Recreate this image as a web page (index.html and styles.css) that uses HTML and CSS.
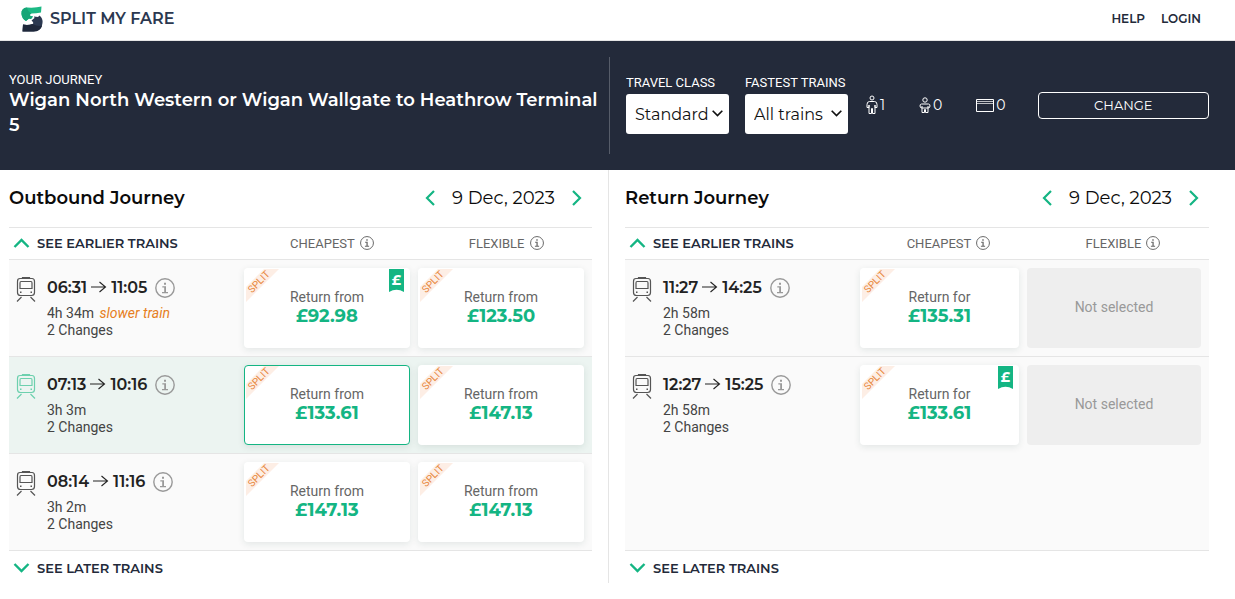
FILE: index.html
```html
<!DOCTYPE html>
<html lang="en">
<head>
<meta charset="utf-8">
<meta name="viewport" content="width=device-width, initial-scale=1">
<title>Split My Fare</title>
<link rel="stylesheet" href="styles.css">
</head>
<body>
<svg class="sprite" aria-hidden="true">
  <symbol id="train" viewBox="0 0 20 26"><g fill="none" stroke="currentColor" stroke-width="1.2"><path d="M4 1.500h12q2.500 0 2.500 3v11q0 3-3 3h-11q-3 0-3-3v-11q0-3 2.500-3zM6.500 1.500v-1h7v1M5 4.500h10q1 0 1 1.500V11.500H4V6Q4 4.500 5 4.500zM5.500 20l-4.500 4.500M14.500 20l4.500 4.500"/></g><path d="M4 14.500h1.500v1.500H4zM14.500 14.500H16v1.500h-1.500z" fill="currentColor"/></symbol>
  <symbol id="info" viewBox="0 0 20 20"><circle cx="10" cy="10" r="9.2" fill="none" stroke="currentColor" stroke-width="1.400"/><path d="M9 4.800h2v2H9zM7.300 8.300h3.700v5.700h2v1.200H7v-1.200h2.200V9.500H7.300z" fill="currentColor"/></symbol>
  <symbol id="arrow" viewBox="0 0 16 12"><path d="M0 6h14.500M8.500 1l6 5-6 5" fill="none" stroke="currentColor" stroke-width="1.100"/></symbol>
  <symbol id="up" viewBox="0 0 16 10"><path d="M1 9l7-7 7 7" fill="none" stroke="currentColor" stroke-width="2.400"/></symbol>
  <symbol id="down" viewBox="0 0 16 10"><path d="M1 1l7 7 7-7" fill="none" stroke="currentColor" stroke-width="2.400"/></symbol>
  <symbol id="prev" viewBox="0 0 10 16"><path d="M9 1L2 8l7 7" fill="none" stroke="currentColor" stroke-width="2.200"/></symbol>
  <symbol id="next" viewBox="0 0 10 16"><path d="M1 1l7 7-7 7" fill="none" stroke="currentColor" stroke-width="2.200"/></symbol>
  <symbol id="best" viewBox="0 0 15 23"><path d="M0 0h15v23q-7.500-4.500-15 0z" fill="#14b583"/></symbol>
</svg>

<header class="topbar">
  <a class="brand" href="#">
    <svg class="brand-mark" viewBox="0 0 22 26" aria-hidden="true">
      <path d="M.500 8Q0 2 6 1.500Q15 2 20.500.5L20 6.500Q15 7.500 10.500 7.500Q8 8.500 9.500 10L12 10.500L10 13L8 12.500L5 15Q1 13 .500 8z" fill="#1cb984"/>
      <path d="M.500 8Q0 2 6 1.500Q7 6 10.500 7.500Q8 8.500 9.500 10L12 10.500L10 13L8 12.500L5 15Q1 13 .500 8z" fill="#17a577"/>
      <path d="M10.500 14.500l3-2.500-.5-1.500 4 .5 1.500-1.500Q22 12 21.500 17q-.5 8-9 8.500H1.500l.5-7q5 1 9.500-.5 2-1-1-3.500z" fill="#2b3850"/>
      <path d="M2 18.500q5 1 9.500-.5 6 3 9.500 1.500-1.500 6-8.500 6H1.500z" fill="#1f283b"/>
    </svg>
    <span>SPLIT MY FARE</span>
  </a>
  <nav class="topnav"><a href="#">HELP</a><a href="#">LOGIN</a></nav>
</header>

<section class="banner">
  <div class="trip">
    <p class="label">YOUR JOURNEY</p>
    <h1>Wigan North Western or Wigan Wallgate to Heathrow Terminal 5</h1>
  </div>
  <form class="filters">
    <div class="field"><label class="label" for="class">TRAVEL CLASS</label>
      <span class="select"><select id="class"><option>Standard</option></select><svg viewBox="0 0 16 10"><use href="#down"/></svg></span></div>
    <div class="field"><label class="label" for="speed">FASTEST TRAINS</label>
      <span class="select"><select id="speed"><option>All trains</option></select><svg viewBox="0 0 16 10"><use href="#down"/></svg></span></div>
    <div class="party">
      <span class="count"><svg width="12" height="20" viewBox="0 0 12 20" fill="none" stroke="currentColor"><circle cx="6" cy="3" r="2"/><path d="M3.500 6.500h5q2.500 0 2.500 3v3H9V10v8.500H6.500v-5h-1v5H3V10v2.500H1v-3q0-3 2.500-3z"/></svg>1</span>
      <span class="count"><svg width="12" height="18" viewBox="0 0 12 18" fill="none" stroke="currentColor"><circle cx="6" cy="4" r="2.200"/><path d="M2.500 8h7q1.500 0 1.500 2t-2 2v4.500H6.500v-3h-1v3H3V12q-2 0-2-2t1.500-2zM3 10v2h6v-2"/></svg>0</span>
      <span class="count"><svg width="18" height="13" viewBox="0 0 18 13" fill="none" stroke="currentColor"><path d="M.5.5h17v12H.5z"/><path d="M1 2.500h16M1 4.500h16" opacity=".7"/></svg>0</span>
    </div>
    <button class="change" type="button">CHANGE</button>
  </form>
</section>

<main class="journeys">
  <section class="journey outbound">
    <div class="heading">
      <h2>Outbound Journey</h2>
      <div class="date"><button type="button" aria-label="Previous day"><svg><use href="#prev"/></svg></button><span>9 Dec, 2023</span><button type="button" aria-label="Next day"><svg><use href="#next"/></svg></button></div>
    </div>
    <div class="columns">
      <button class="more" type="button"><svg><use href="#up"/></svg>SEE EARLIER TRAINS</button>
      <span class="column">CHEAPEST <svg><use href="#info"/></svg></span>
      <span class="column">FLEXIBLE <svg><use href="#info"/></svg></span>
    </div>
    <div class="trains">
      <article class="train">
        <svg class="train-icon"><use href="#train"/></svg>
        <div class="details"><h3>06:31<svg class="arrow"><use href="#arrow"/></svg>11:05<svg class="info"><use href="#info"/></svg></h3><p>4h 34m <em>slower train</em></p><p>2 Changes</p></div>
        <button class="fare" type="button"><span class="split"><span>SPLIT</span></span><span class="best"><svg><use href="#best"/></svg><b>£</b></span>Return from<strong>£92.98</strong></button>
        <button class="fare" type="button"><span class="split"><span>SPLIT</span></span>Return from<strong>£123.50</strong></button>
      </article>
      <article class="train active">
        <svg class="train-icon"><use href="#train"/></svg>
        <div class="details"><h3>07:13<svg class="arrow"><use href="#arrow"/></svg>10:16<svg class="info"><use href="#info"/></svg></h3><p>3h 3m</p><p>2 Changes</p></div>
        <button class="fare chosen" type="button"><span class="split"><span>SPLIT</span></span>Return from<strong>£133.61</strong></button>
        <button class="fare" type="button"><span class="split"><span>SPLIT</span></span>Return from<strong>£147.13</strong></button>
      </article>
      <article class="train">
        <svg class="train-icon"><use href="#train"/></svg>
        <div class="details"><h3>08:14<svg class="arrow"><use href="#arrow"/></svg>11:16<svg class="info"><use href="#info"/></svg></h3><p>3h 2m</p><p>2 Changes</p></div>
        <button class="fare" type="button"><span class="split"><span>SPLIT</span></span>Return from<strong>£147.13</strong></button>
        <button class="fare" type="button"><span class="split"><span>SPLIT</span></span>Return from<strong>£147.13</strong></button>
      </article>
    </div>
    <button class="more later" type="button"><svg><use href="#down"/></svg>SEE LATER TRAINS</button>
  </section>

  <section class="journey return">
    <div class="heading">
      <h2>Return Journey</h2>
      <div class="date"><button type="button" aria-label="Previous day"><svg><use href="#prev"/></svg></button><span>9 Dec, 2023</span><button type="button" aria-label="Next day"><svg><use href="#next"/></svg></button></div>
    </div>
    <div class="columns">
      <button class="more" type="button"><svg><use href="#up"/></svg>SEE EARLIER TRAINS</button>
      <span class="column">CHEAPEST <svg><use href="#info"/></svg></span>
      <span class="column">FLEXIBLE <svg><use href="#info"/></svg></span>
    </div>
    <div class="trains">
      <article class="train">
        <svg class="train-icon"><use href="#train"/></svg>
        <div class="details"><h3>11:27<svg class="arrow"><use href="#arrow"/></svg>14:25<svg class="info"><use href="#info"/></svg></h3><p>2h 58m</p><p>2 Changes</p></div>
        <button class="fare" type="button"><span class="split"><span>SPLIT</span></span>Return for<strong>£135.31</strong></button>
        <div class="fare empty">Not selected</div>
      </article>
      <article class="train">
        <svg class="train-icon"><use href="#train"/></svg>
        <div class="details"><h3>12:27<svg class="arrow"><use href="#arrow"/></svg>15:25<svg class="info"><use href="#info"/></svg></h3><p>2h 58m</p><p>2 Changes</p></div>
        <button class="fare" type="button"><span class="split"><span>SPLIT</span></span><span class="best"><svg><use href="#best"/></svg><b>£</b></span>Return for<strong>£133.61</strong></button>
        <div class="fare empty">Not selected</div>
      </article>
    </div>
    <button class="more later" type="button"><svg><use href="#down"/></svg>SEE LATER TRAINS</button>
  </section>
</main>
</body>
</html>
```
FILE: styles.css
```css
:root {
  --display: Montserrat, Inter, sans-serif;
  --text: Roboto, "Liberation Sans", sans-serif;
  --green: #14b583;
  --navy: #232a3a;
  --line: #e5e5e5;
}
* { box-sizing: border-box; }
body { margin: 0; background: #fff; color: #444; font: 14px/17px var(--text); }
h1, h2, h3, p { margin: 0; }
button { padding: 0; border: 0; background: none; color: inherit; font: inherit; cursor: pointer; }
a { color: inherit; text-decoration: none; }
svg { flex: none; }
.sprite { position: absolute; width: 0; height: 0; }

.topbar { display: flex; align-items: center; justify-content: space-between; height: 41px; padding: 0 34px 2px 21px; border-bottom: 1px solid var(--line); }
.brand { display: flex; align-items: center; gap: 7px; color: #2b3850; font: 600 16px/20px var(--display); }
.brand-mark { width: 22px; height: 26px; }
.topnav { display: flex; gap: 16px; color: #232a3a; font: 600 12px/20px var(--display); }

.banner { display: grid; grid-template-columns: 601fr 599fr; padding: 16px 26px 16px 9px; background: var(--navy); color: #fff; }
.trip { min-height: 97px; padding: 15px 8px 0 0; border-right: 1px solid #565c69; }
.label { display: block; font: 400 13px/16px var(--text); }
.trip h1 { font: 600 18px/25px var(--display); }
.filters { display: flex; align-items: flex-start; gap: 16px; padding: 18px 0 0 16px; }
.field .label { padding-bottom: 3px; }
.select { position: relative; display: block; }
.select select { display: block; appearance: none; width: 100%; min-width: 103px; height: 40px; padding: 1px 20px 0 9px; border: 0; border-radius: 3px; background: #fff; color: #111; font: 400 16px/24px var(--display); }
.select svg { position: absolute; right: 6px; top: 16px; width: 11px; height: 7px; color: #111; pointer-events: none; }
.party { display: flex; gap: 34px; padding: 20px 0 0 2px; }
.count { display: flex; align-items: center; gap: 2px; height: 20px; font: 400 14px/20px var(--display); }
.change { flex: 1; height: 27px; margin: 17px 0 0 16px; padding-bottom: 2px; border: 1px solid #fff; border-radius: 4px; font: 400 13px/20px var(--display); }

.journeys { display: grid; grid-template-columns: 1fr 1fr; padding: 0 26px 0 9px; }
.journey { display: flex; flex-direction: column; }
.outbound { padding-right: 16px; border-right: 1px solid var(--line); }
.return { padding-left: 16px; }
.heading { display: flex; align-items: center; justify-content: space-between; padding: 14px 10px 15px 0; color: #0b0b0b; }
.heading h2 { font: 600 18px/28px var(--display); }
.date { display: flex; align-items: center; gap: 17px; font: 400 18px/28px var(--display); }
.date button { display: flex; color: var(--green); }
.date svg { width: 10px; height: 16px; }
.columns { display: grid; grid-template-columns: 235fr 177fr 172fr; align-items: center; height: 33px; padding-bottom: 1px; border: solid var(--line); border-width: 1px 0; }
.column { display: flex; align-items: center; justify-content: center; gap: 5px; color: #666; font-size: 13px; }
.column svg { width: 14px; height: 14px; }
.more { display: flex; align-items: center; gap: 7px; padding-left: 4px; color: var(--navy); font: 600 13px/20px var(--display); }
.more svg { width: 17px; height: 10px; color: var(--green); }
.later { padding: 7px 0 5px 4px; }
.trains { flex: 1; border-bottom: 1px solid var(--line); background: #fafafa; }
.train { display: grid; grid-template-columns: 30px 189fr 166fr 166fr; column-gap: 8px; padding: 8px 8px 8px 0; }
.return .train { grid-template-columns: 30px 189fr 159fr 174fr; }
.train + .train { border-top: 1px solid var(--line); }
.train.active { background: #ecf4f1; }
.train-icon { justify-self: end; width: 20px; height: 26px; margin: 9px 3px 0 0; color: #555; }
.active .train-icon { color: #6dd0ae; }
.details { padding-top: 9px; white-space: nowrap; }
.details h3 { display: flex; align-items: center; height: 22px; margin-bottom: 6px; color: #222; font: 600 16px/22px var(--display); }
.arrow { width: 16px; height: 12px; margin: 0 4px 3px; }
.info { width: 20px; height: 20px; margin-left: 8px; color: #999; }
.details em { margin-left: 2px; color: #e67e22; }
.fare { position: relative; display: flex; flex-direction: column; align-items: center; justify-content: center; height: 80px; border: 1px solid transparent; border-radius: 4px; background: #fff; box-shadow: 0 2px 7px rgba(20, 60, 50, .1); color: #666; }
.fare strong { color: var(--green); font: 700 18px/21px var(--display); }
.fare.chosen { border-color: var(--green); }
.fare.empty { padding-bottom: 2px; background: #eee; box-shadow: none; color: #999; }
.split { position: absolute; left: 1px; top: 0; display: grid; place-items: center; width: 26px; height: 25px; }
.split::before { content: ""; position: absolute; left: 0; top: 0; width: 33px; height: 33px; background: #fdeee5; clip-path: polygon(18px 0, 33px 0, 0 33px, 0 18px); }
.split span { position: relative; color: #e8873c; font-size: 10px; line-height: 12px; transform: rotate(-45deg); }
.best { position: absolute; right: 5px; top: 0; width: 15px; height: 23px; }
.best svg { display: block; width: 15px; height: 23px; }
.best b { position: absolute; inset: 0; color: #fff; font: 700 14px/23px var(--display); }
```
